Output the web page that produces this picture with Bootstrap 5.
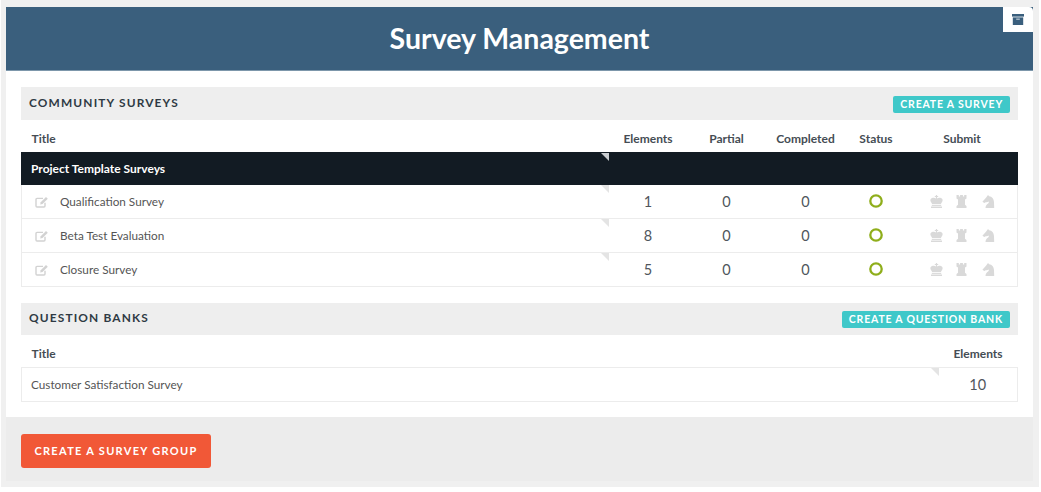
<!DOCTYPE html>
<html lang="en">
<head>
<meta charset="utf-8">
<title>Survey Management</title>
<link href="https://cdn.jsdelivr.net/npm/bootstrap@5.3.0/dist/css/bootstrap.min.css" rel="stylesheet">
<style>
html,body{background:#fff;height:492px;overflow:hidden}
body{font-family:Lato,"Liberation Sans",sans-serif;font-size:12px;color:#4a4a4a}
.page-shell{background:#f0f0f0;height:487px;margin:0 2px 0 1px;padding:7px 6px 6px 5px}
.panel-shell{background:#fff;height:410px;position:relative;border-radius:0 4px 0 0}
.top-bar{background:#3a5f7d;height:64px;border-bottom:1px solid #7d97ab;color:#fff;font-size:28.5px;font-weight:700;line-height:62px;text-align:center}
.archive-tab{position:absolute;top:0;right:0;width:30px;height:25px;background:#fff;border-radius:0 4px 0 0;display:flex;align-items:center;justify-content:center}
.panel-body{padding:16px 15px 0}
.sect-head{background:#eee;height:33px;padding:0 8px;color:#2f3a44;font-size:11.9px;font-weight:700;letter-spacing:1.15px}
.sect-head.second{height:32px}
.sect-head .teal-btn{margin-top:1px}
.sect-head span{margin-bottom:2px}
.teal-btn{background:#3fc8c9;color:#fff;border:0;border-radius:2px;height:17px;line-height:17px;padding:0 7px;font-size:10.5px;font-weight:700;letter-spacing:.81px}
.survey-table{width:100%;table-layout:fixed;border-collapse:collapse;margin:0}
.survey-table th{height:32px;font-weight:700;font-size:12px;color:#454d54;padding:7px 0 0;vertical-align:middle;text-align:center}
.survey-table th.t-left{text-align:left;padding-left:10px}
.survey-table.bank-table th{height:33px}
.survey-table td{height:34px;border-top:1px solid #ececec;border-bottom:1px solid #ececec;vertical-align:middle;text-align:center;padding:1px 0 0;font-size:14.5px;color:#50565c}
.survey-table tr td:first-child{border-left:1px solid #ececec;text-align:left;font-size:11.75px;color:#555;position:relative}
.survey-table tr td:last-child{border-right:1px solid #ececec}
.survey-table tr.group-row td{background:#121b23;border-color:#121b23;color:#fff;font-weight:700;font-size:12px;height:32px}
.survey-table tr.group-row td:first-child{padding-left:9px}
.row-name{display:flex;align-items:center;padding-left:13px;gap:11px}
.row-name.plain{padding-left:9px}
.corner-mark{position:absolute;top:0;right:0;width:0;height:0;border-top:8px solid #e4e4e4;border-left:8px solid transparent}
.group-row .corner-mark{border-top-color:#c9cdd0}
.num-blue{color:#3a5f7d}
.ring-mark{display:block;margin:-1px auto 0}
.chess-set{display:flex;justify-content:center;gap:13px;padding-left:2px}
.chess-set .knight-ico{margin-left:2px}
.foot-zone{background:#ececec;height:64px;padding:17px 15px}
.orange-btn{background:#f15837;color:#fff;border:0;border-radius:3px;height:34px;width:190px;font-size:11px;font-weight:700;letter-spacing:1.3px;padding:0}
.gap-sect{height:16px}
</style>
</head>
<body>
<svg width="0" height="0" class="d-block" aria-hidden="true">
  <defs>
    <symbol id="ico-edit" viewBox="0 0 14 12"><path d="M10 6.800V10a1 1 0 0 1-1 1H2a1 1 0 0 1-1-1V3.400a1 1 0 0 1 1-1h6" fill="none" stroke="#d2d2d2" stroke-width="1.400"/><path d="M5.200 8.400l.5-2.200L11 .9l1.800 1.800-5.300 5.200z" fill="#d2d2d2"/></symbol>
    <symbol id="ico-ring" viewBox="0 0 14 14"><circle cx="7" cy="7" r="5.700" fill="none" stroke="#8fae1b" stroke-width="2.300"/></symbol>
    <symbol id="ico-king" viewBox="0 0 13 13"><path d="M5.900 0h1.200v1.100h1.100v1H7.100v1.300C8 2.600 9.400 2.400 11 3c1.900.8 2 2.700 1 4.100L10.900 9H2.100L1 7.100C0 5.700.1 3.800 2 3c1.600-.6 3-.4 3.900.4V2.100H4.800v-1h1.100z" fill="#d9d9d9"/><rect x="1.800" y="9.800" width="9.400" height="1.100" fill="#d9d9d9"/><rect x="1" y="11.500" width="11" height="1.500" fill="#d9d9d9"/></symbol>
    <symbol id="ico-rook" viewBox="0 0 11 13"><path d="M.5 0h2.300v1.400h1.300V0h2.800v1.400h1.300V0h2.300v3.500L9 4.600v5.100l1.500 1.200V13H.5v-2.100L2 9.700V4.600L.5 3.500z" fill="#d9d9d9"/></symbol>
    <symbol id="ico-knight" viewBox="0 0 13 13"><path d="M6 0l1.200 1.300C10 1.600 11.800 3.800 12 7l.2 6H3.500c0-2.300 1.200-3.500 2.600-4.500.8-.6.9-1.200.6-1.900-.9.700-2 .9-3 .7L2.300 8 .4 6.700 4.200 2.500z" fill="#d9d9d9"/></symbol>
  </defs>
</svg>
<div class="page-shell">
  <div class="panel-shell">
    <div class="top-bar">Survey Management</div>
    <div class="archive-tab">
      <svg width="12" height="11" viewBox="0 0 12 11" aria-hidden="true"><rect x="0" y="0" width="12" height="2.600" fill="#3a5f7d"/><path d="M.8 3.400h10.400V11H.8z" fill="#3a5f7d"/><rect x="4.200" y="4.600" width="3.600" height="1.100" fill="#c9d5de"/></svg>
    </div>
    <div class="panel-body">
      <div class="sect-head d-flex align-items-center justify-content-between">
        <span>COMMUNITY SURVEYS</span>
        <button type="button" class="teal-btn">CREATE A SURVEY</button>
      </div>
      <table class="survey-table">
        <colgroup><col style="width:587px"><col style="width:79px"><col style="width:78px"><col style="width:80px"><col style="width:61px"><col></colgroup>
        <thead><tr><th class="t-left">Title</th><th>Elements</th><th>Partial</th><th>Completed</th><th>Status</th><th>Submit</th></tr></thead>
        <tbody>
          <tr class="group-row"><td>Project Template Surveys<i class="corner-mark"></i></td><td></td><td></td><td></td><td></td><td></td></tr>
          <tr><td><div class="row-name"><svg width="14" height="12" aria-hidden="true"><use href="#ico-edit"/></svg>Qualification Survey</div><i class="corner-mark"></i></td><td>1</td><td>0</td><td>0</td><td><svg class="ring-mark" width="14" height="14" aria-hidden="true"><use href="#ico-ring"/></svg></td><td><div class="chess-set"><svg width="13" height="13" aria-hidden="true"><use href="#ico-king"/></svg><svg width="11" height="13" aria-hidden="true"><use href="#ico-rook"/></svg><svg class="knight-ico" width="13" height="13" aria-hidden="true"><use href="#ico-knight"/></svg></div></td></tr>
          <tr><td><div class="row-name"><svg width="14" height="12" aria-hidden="true"><use href="#ico-edit"/></svg>Beta Test Evaluation</div><i class="corner-mark"></i></td><td class="num-blue">8</td><td>0</td><td>0</td><td><svg class="ring-mark" width="14" height="14" aria-hidden="true"><use href="#ico-ring"/></svg></td><td><div class="chess-set"><svg width="13" height="13" aria-hidden="true"><use href="#ico-king"/></svg><svg width="11" height="13" aria-hidden="true"><use href="#ico-rook"/></svg><svg class="knight-ico" width="13" height="13" aria-hidden="true"><use href="#ico-knight"/></svg></div></td></tr>
          <tr><td><div class="row-name"><svg width="14" height="12" aria-hidden="true"><use href="#ico-edit"/></svg>Closure Survey</div><i class="corner-mark"></i></td><td class="num-blue">5</td><td>0</td><td>0</td><td><svg class="ring-mark" width="14" height="14" aria-hidden="true"><use href="#ico-ring"/></svg></td><td><div class="chess-set"><svg width="13" height="13" aria-hidden="true"><use href="#ico-king"/></svg><svg width="11" height="13" aria-hidden="true"><use href="#ico-rook"/></svg><svg class="knight-ico" width="13" height="13" aria-hidden="true"><use href="#ico-knight"/></svg></div></td></tr>
        </tbody>
      </table>
      <div class="gap-sect"></div>
      <div class="sect-head second d-flex align-items-center justify-content-between">
        <span>QUESTION BANKS</span>
        <button type="button" class="teal-btn">CREATE A QUESTION BANK</button>
      </div>
      <table class="survey-table bank-table">
        <colgroup><col style="width:917px"><col></colgroup>
        <thead><tr><th class="t-left">Title</th><th>Elements</th></tr></thead>
        <tbody><tr><td><div class="row-name plain">Customer Satisfaction Survey</div><i class="corner-mark"></i></td><td>10</td></tr></tbody>
      </table>
    </div>
  </div>
  <div class="foot-zone"><button type="button" class="orange-btn">CREATE A SURVEY GROUP</button></div>
</div>
<script src="https://cdn.jsdelivr.net/npm/bootstrap@5.3.0/dist/js/bootstrap.bundle.min.js"></script>
</body>
</html>
